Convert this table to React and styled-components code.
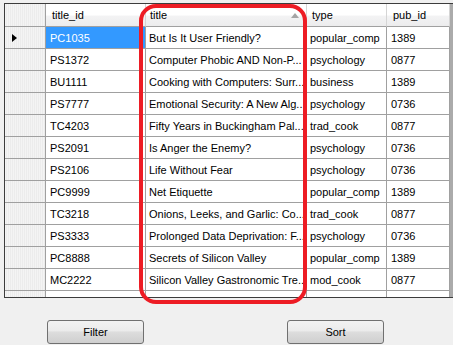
import React from "react";
import styled, { createGlobalStyle } from "styled-components";

const GlobalStyle = createGlobalStyle`
  html, body {
    margin: 0;
    padding: 0;
    background: #f0f0f0;
    font-family: "Liberation Sans", Arial, sans-serif;
    font-size: 11px;
  }
`;

const titles = [
  ["PC1035", "But Is It User Friendly?", "popular_comp", "1389"],
  ["PS1372", "Computer Phobic AND Non-P...", "psychology", "0877"],
  ["BU1111", "Cooking with Computers: Surr...", "business", "1389"],
  ["PS7777", "Emotional Security: A New Alg...", "psychology", "0736"],
  ["TC4203", "Fifty Years in Buckingham Pal...", "trad_cook", "0877"],
  ["PS2091", "Is Anger the Enemy?", "psychology", "0736"],
  ["PS2106", "Life Without Fear", "psychology", "0736"],
  ["PC9999", "Net Etiquette", "popular_comp", "1389"],
  ["TC3218", "Onions, Leeks, and Garlic: Co...", "trad_cook", "0877"],
  ["PS3333", "Prolonged Data Deprivation: F...", "psychology", "0736"],
  ["PC8888", "Secrets of Silicon Valley", "popular_comp", "1389"],
  ["MC2222", "Silicon Valley Gastronomic Tre...", "mod_cook", "0877"],
];

const COLS = "41px 100px 161px 80px 63px 1fr";

const Form = styled.div`
  position: relative;
  width: 453px;
  height: 345px;
  overflow: hidden;
  background: #f0f0f0;
`;

const Grid = styled.div`
  margin: 3px 0 0 4px;
  width: 460px;
  height: 295px;
  box-sizing: border-box;
  border: 1px solid #3c3c3c;
  border-right: none;
  background: #ababab;
  overflow: hidden;
`;

const Row = styled.div`
  display: grid;
  grid-template-columns: ${COLS};
  height: ${(p) => (p.$header ? "23px" : "22px")};
`;

const Corner = styled.div`
  background: repeating-linear-gradient(90deg, #f4f4f4 0 1px, #ececec 1px 2px);
  border-right: 1px solid #a0a0a0;
  border-bottom: 1px solid #a0a0a0;
`;

const HeadCell = styled.div`
  position: relative;
  display: flex;
  align-items: center;
  padding-left: ${(p) => p.$pad || 5}px;
  background: linear-gradient(#ffffff 0%, #ffffff 50%, #f3f3f4 55%, #ececed 100%);
  border-right: 1px solid #d5d5d5;
  border-bottom: 1px solid #a0a0a0;
  color: #000;
  white-space: nowrap;
`;

const SortGlyph = styled.span`
  position: absolute;
  right: 7px;
  top: 9px;
  width: 0;
  height: 0;
  border-left: 4px solid transparent;
  border-right: 4px solid transparent;
  border-bottom: 5px solid #a5a5a5;
`;

const RowHead = styled.div`
  display: flex;
  align-items: center;
  padding-left: 7px;
  background: repeating-linear-gradient(90deg, #f4f4f4 0 1px, #ececec 1px 2px);
  border-right: 1px solid #a0a0a0;
  border-bottom: 1px solid #a0a0a0;
`;

const Arrow = styled.span`
  width: 0;
  height: 0;
  border-top: 4px solid transparent;
  border-bottom: 4px solid transparent;
  border-left: 5px solid #000;
`;

const Cell = styled.div`
  display: flex;
  align-items: center;
  padding-left: ${(p) => p.$pad || 3}px;
  background: ${(p) => (p.$selected ? "#3399ff" : "#fff")};
  color: ${(p) => (p.$selected ? "#fff" : "#000")};
  border-right: 1px solid #a0a0a0;
  border-bottom: 1px solid #a0a0a0;
  white-space: nowrap;
  overflow: hidden;
`;

const Filler = styled.div`
  background: #ababab;
`;

const NewRowHead = styled(RowHead)`
  border-bottom: none;
`;

const NewCell = styled(Cell)`
  border-bottom: none;
`;

const Buttons = styled.div`
  display: flex;
  margin: 22px 0 0 47px;
  gap: 143px;
`;

const Button = styled.button`
  width: 97px;
  height: 24px;
  padding: 0;
  border: 1px solid #707070;
  border-radius: 3px;
  background: linear-gradient(#f2f2f2 0%, #ebebeb 45%, #dddddd 50%, #cfcfcf 100%);
  font-family: "Liberation Sans", Arial, sans-serif;
  font-size: 11px;
  color: #000;
`;

const Highlight = styled.div`
  position: absolute;
  left: 139px;
  top: 4px;
  width: 168px;
  height: 300px;
  box-sizing: border-box;
  border: 4px solid #ed1c24;
  border-radius: 17px;
  pointer-events: none;
`;

export default function App() {
  return (
    <Form>
      <GlobalStyle />
      <Grid>
        <Row $header>
          <Corner />
          <HeadCell $pad={6}>title_id</HeadCell>
          <HeadCell $pad={4}>
            title
            <SortGlyph />
          </HeadCell>
          <HeadCell $pad={5}>type</HeadCell>
          <HeadCell $pad={6}>pub_id</HeadCell>
          <Filler />
        </Row>
        {titles.map(([id, title, type, pub], i) => (
          <Row key={id}>
            <RowHead>{i === 0 && <Arrow />}</RowHead>
            <Cell $selected={i === 0} $pad={4}>
              {id}
            </Cell>
            <Cell>{title}</Cell>
            <Cell>{type}</Cell>
            <Cell $pad={4}>{pub}</Cell>
            <Filler />
          </Row>
        ))}
        <Row>
          <NewRowHead />
          <NewCell />
          <NewCell />
          <NewCell />
          <NewCell />
          <Filler />
        </Row>
      </Grid>
      <Buttons>
        <Button>Filter</Button>
        <Button>Sort</Button>
      </Buttons>
      <Highlight />
    </Form>
  );
}
